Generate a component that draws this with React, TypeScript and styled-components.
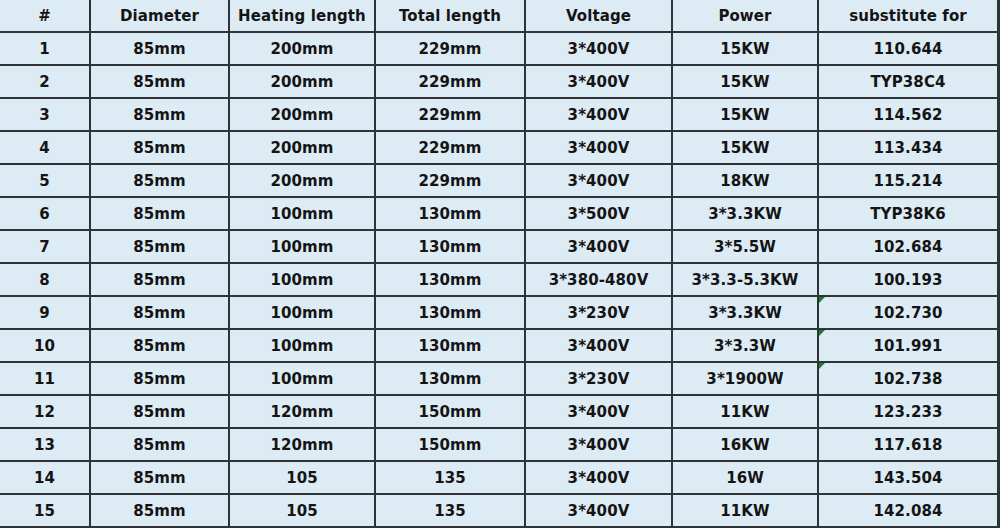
import styled, { createGlobalStyle } from 'styled-components'

const GlobalStyle = createGlobalStyle`
  html, body {
    margin: 0;
    padding: 0;
    background: #ddebf5;
  }
`

interface CellProps {
  flagged?: boolean
}

const Grid = styled.div`
  display: grid;
  grid-template-columns: 89px 137px 144px 148px 145px 144px 178px;
  grid-template-rows: 31px repeat(15, 31px);
  column-gap: 2px;
  row-gap: 2px;
  padding: 0 1px 2px 0;
  width: 999px;
  background: #2e3338;
  font-family: 'DejaVu Sans', Verdana, sans-serif;
  font-weight: bold;
  font-size: 15px;
  color: #141414;
`

const Cell = styled.div<CellProps>`
  position: relative;
  display: flex;
  align-items: center;
  justify-content: center;
  background: #ddebf5;
  white-space: nowrap;
  letter-spacing: 0.1px;

  ${(props) =>
    props.flagged === true &&
    `
    &::before {
      content: '';
      position: absolute;
      left: 0;
      top: 0;
      border-top: 6px solid #1f7a2e;
      border-right: 6px solid transparent;
    }
  `}
`

const HeadCell = styled(Cell)`
  font-size: 15px;
`

const headers = [
  '#',
  'Diameter',
  'Heating length',
  'Total length',
  'Voltage',
  'Power',
  'substitute for'
]

const rows = [
  ['1', '85mm', '200mm', '229mm', '3*400V', '15KW', '110.644'],
  ['2', '85mm', '200mm', '229mm', '3*400V', '15KW', 'TYP38C4'],
  ['3', '85mm', '200mm', '229mm', '3*400V', '15KW', '114.562'],
  ['4', '85mm', '200mm', '229mm', '3*400V', '15KW', '113.434'],
  ['5', '85mm', '200mm', '229mm', '3*400V', '18KW', '115.214'],
  ['6', '85mm', '100mm', '130mm', '3*500V', '3*3.3KW', 'TYP38K6'],
  ['7', '85mm', '100mm', '130mm', '3*400V', '3*5.5W', '102.684'],
  ['8', '85mm', '100mm', '130mm', '3*380-480V', '3*3.3-5.3KW', '100.193'],
  ['9', '85mm', '100mm', '130mm', '3*230V', '3*3.3KW', '102.730'],
  ['10', '85mm', '100mm', '130mm', '3*400V', '3*3.3W', '101.991'],
  ['11', '85mm', '100mm', '130mm', '3*230V', '3*1900W', '102.738'],
  ['12', '85mm', '120mm', '150mm', '3*400V', '11KW', '123.233'],
  ['13', '85mm', '120mm', '150mm', '3*400V', '16KW', '117.618'],
  ['14', '85mm', '105', '135', '3*400V', '16W', '143.504'],
  ['15', '85mm', '105', '135', '3*400V', '11KW', '142.084']
]

// rows whose "substitute for" cell carries the little green marker
const flaggedRows = ['9', '10', '11']

export default function App () {
  return (
    <>
      <GlobalStyle />
      <Grid>
        {headers.map((h) => (
          <HeadCell key={h}>{h}</HeadCell>
        ))}
        {rows.map((row) =>
          row.map((value, i) => (
            <Cell
              key={`${row[0]}-${i}`}
              flagged={i === 6 && flaggedRows.includes(row[0])}
            >
              {value}
            </Cell>
          ))
        )}
      </Grid>
    </>
  )
}
